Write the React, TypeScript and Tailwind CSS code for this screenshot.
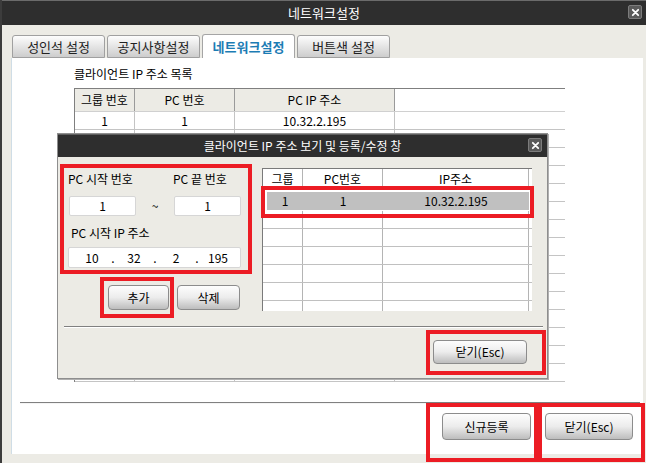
import React from 'react';

const Btn: React.FC<{ className?: string; children: React.ReactNode }> = ({ className = '', children }) => (
  <button
    className={`flex items-center justify-center rounded-[4px] border border-[#8c8c8c] bg-linear-to-b from-[#fdfdfd] via-[#ececec] to-[#bdbdbd] text-[12px] leading-none text-black ${className}`}
  >
    {children}
  </button>
);

const CloseIcon = () => (
  <div className="flex h-[14px] w-[14px] items-center justify-center rounded-[2px] border border-[#7c7c7c] bg-[#5a5a5a]">
    <svg viewBox="0 0 10 10" className="h-[9px] w-[9px]">
      <path d="M2 2 L8 8 M8 2 L2 8" stroke="#fff" strokeWidth="2" strokeLinecap="round" />
    </svg>
  </div>
);

const tabs = ['성인석 설정', '공지사항설정', '네트워크설정', '버튼색 설정'];

export default function App() {
  const mainRows = Array.from({ length: 14 });
  const dlgRows = Array.from({ length: 6 });

  return (
    <div className="relative h-[463px] w-[646px] overflow-hidden border-l-2 border-[#3c3c3c] bg-[#ecebe5] font-['Noto_Sans_CJK_KR','Noto_Sans',sans-serif] text-black">
      {/* title bar */}
      <div className="relative flex h-[25px] items-center justify-center border-t border-[#6b6b6b] bg-[#2e2e2e] text-[13px] text-white">
        네트워크설정
        <div className="absolute right-[4px] top-[4px]">
          <CloseIcon />
        </div>
      </div>

      {/* tabs */}
      <div className="mt-[9px] flex h-[24px] items-end gap-[2px] pl-[10px]">
        {tabs.map((t, i) =>
          i === 2 ? (
            <div
              key={t}
              className="flex h-[24px] w-[93px] items-center justify-center rounded-t-[3px] border border-b-0 border-[#a5a5a5] bg-white text-[13px] font-bold text-[#1c7cb4]"
            >
              {t}
            </div>
          ) : (
            <div
              key={t}
              className="flex h-[23px] w-[93px] items-center justify-center rounded-t-[3px] border border-[#a0a0a0] bg-linear-to-b from-[#fdfdfd] to-[#cdcdcd] text-[13px] text-[#222]"
            >
              {t}
            </div>
          )
        )}
      </div>

      {/* panel */}
      <div className="ml-[9px] mr-[3px] h-[396px] border-l border-[#cfdde6] bg-white pt-[8px]">
        <div className="ml-[62px] text-[12px] leading-[16px]">클라이언트 IP 주소 목록</div>

        <div className="ml-[62px] mt-[6px] w-[491px] border-l border-t border-[#7f7f7f] text-[12px]">
          <div className="flex h-[23px] items-stretch border-b border-[#d0d0d0]">
            <div className="flex w-[60px] items-center justify-center border-r border-[#9a9a9a] bg-[#ecebe5]">그룹 번호</div>
            <div className="flex w-[100px] items-center justify-center border-r border-[#9a9a9a] bg-[#ecebe5]">PC 번호</div>
            <div className="flex w-[160px] items-center justify-center border-r border-[#9a9a9a] bg-[#ecebe5]">PC IP 주소</div>
            <div className="flex-1 bg-white" />
          </div>
          <div className="flex h-[18px] border-b border-[#c4c4c4]">
            <div className="flex w-[60px] items-center justify-center border-r border-[#c4c4c4]">1</div>
            <div className="flex w-[100px] items-center justify-center border-r border-[#c4c4c4]">1</div>
            <div className="flex w-[160px] items-center justify-center border-r border-[#c4c4c4]">10.32.2.195</div>
            <div className="flex-1" />
          </div>
          {mainRows.map((_, i) => (
            <div key={i} className="flex h-[18px] border-b border-[#c4c4c4]">
              <div className="w-[60px] border-r border-[#c4c4c4]" />
              <div className="w-[100px] border-r border-[#c4c4c4]" />
              <div className="w-[160px] border-r border-[#c4c4c4]" />
              <div className="flex-1" />
            </div>
          ))}
        </div>

        <div className="ml-[8px] mt-[20px] h-[2px] w-[620px] border-t border-[#808080] border-b border-b-[#f4f4f4]" />

        <div className="mt-[9px] flex justify-end gap-[14px] pr-[10px]">
          <Btn className="h-[27px] w-[89px]">신규등록</Btn>
          <Btn className="h-[27px] w-[88px]">닫기(Esc)</Btn>
        </div>
      </div>

      {/* dialog */}
      <div className="absolute left-[55px] top-[133px] h-[246px] w-[491px] border border-[#8e8e8e] bg-[#ecebe5] shadow-[1px_1px_0_#b0b0b0]">
        <div className="relative flex h-[23px] items-center justify-center border-t border-[#5e5e5e] bg-[#2e2e2e] text-[12px] text-white">
          클라이언트 IP 주소 보기 및 등록/수정 창
          <div className="absolute right-[5px] top-[3px]">
            <CloseIcon />
          </div>
        </div>

        <div className="flex h-[163px]">
          <div className="w-[204px] pl-[10px] pt-[14px] text-[12px] leading-[16px]">
            <div className="flex">
              <span className="w-[105px]">PC 시작 번호</span>
              <span>PC 끝 번호</span>
            </div>
            <div className="mt-[9px] flex items-center">
              <div className="ml-[1px] flex h-[20px] w-[67px] items-center justify-center rounded-[2px] border border-[#d6d6d6] bg-white">1</div>
              <div className="flex w-[38px] justify-center">~</div>
              <div className="flex h-[20px] w-[67px] items-center justify-center rounded-[2px] border border-[#d6d6d6] bg-white">1</div>
            </div>
            <div className="ml-[3px] mt-[9px]">PC 시작 IP 주소</div>
            <div className="mt-[6px] flex h-[21px] w-[173px] items-center rounded-[2px] border border-[#d6d6d6] bg-white pl-[9px]">
              <span className="w-[28px] text-center">10</span>
              <span className="w-[14px] text-center">.</span>
              <span className="w-[28px] text-center">32</span>
              <span className="w-[14px] text-center">.</span>
              <span className="w-[28px] text-center">2</span>
              <span className="w-[14px] text-center">.</span>
              <span className="w-[28px] text-center">195</span>
            </div>
            <div className="mt-[17px] flex">
              <Btn className="ml-[40px] h-[25px] w-[61px]">추가</Btn>
              <Btn className="ml-[8px] h-[25px] w-[63px]">삭제</Btn>
            </div>
          </div>

          <div className="mt-[11px] h-[143px] w-[270px] overflow-hidden border-l border-t border-[#7a7a7a] bg-white text-[12px]">
            <div className="flex h-[20px]">
              <div className="flex w-[40px] items-center justify-center border-r border-[#b4b4b4]">그룹</div>
              <div className="flex w-[80px] items-center justify-center border-r border-[#b4b4b4]">PC번호</div>
              <div className="flex w-[146px] items-center justify-center border-r border-[#b4b4b4]">IP주소</div>
            </div>
            <div className="h-[22px] pl-[4px] pr-[3px] pt-[3px]">
              <div className="flex h-[18px] bg-[#c0c0c0]">
                <div className="flex w-[36px] items-center justify-center">1</div>
                <div className="flex w-[80px] items-center justify-center">1</div>
                <div className="flex flex-1 items-center justify-center">10.32.2.195</div>
              </div>
            </div>
            {dlgRows.map((_, i) => (
              <div key={i} className="flex h-[18px] border-b border-[#c0c0c0]">
                <div className="w-[40px] border-r border-[#b4b4b4]" />
                <div className="w-[80px] border-r border-[#b4b4b4]" />
                <div className="w-[146px] border-r border-[#b4b4b4]" />
              </div>
            ))}
          </div>
        </div>

        <div className="ml-[6px] mt-[6px] h-[2px] w-[479px] border-t border-[#808080] border-b border-b-white" />

        <div className="mt-[12px] flex justify-end pr-[20px]">
          <Btn className="h-[24px] w-[94px]">닫기(Esc)</Btn>
        </div>
      </div>

      {/* red annotation boxes */}
      <div className="pointer-events-none absolute left-[58px] top-[164px] h-[110px] w-[192px] border-4 border-[#ec1c24]" />
      <div className="pointer-events-none absolute left-[98px] top-[277px] h-[41px] w-[74px] border-4 border-[#ec1c24]" />
      <div className="pointer-events-none absolute left-[259px] top-[186px] h-[32px] w-[273px] border-4 border-[#ec1c24]" />
      <div className="pointer-events-none absolute left-[424px] top-[330px] h-[45px] w-[120px] border-4 border-[#ec1c24]" />
      <div className="pointer-events-none absolute left-[424px] top-[403px] h-[59px] w-[112px] border-4 border-[#ec1c24]" />
      <div className="pointer-events-none absolute left-[536px] top-[403px] h-[59px] w-[107px] border-4 border-[#ec1c24]" />
    </div>
  );
}
